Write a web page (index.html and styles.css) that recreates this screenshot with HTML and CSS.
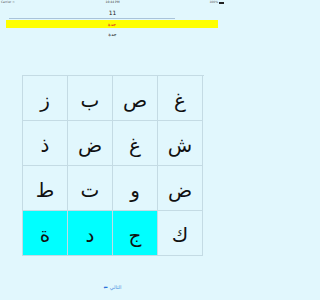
FILE: index.html
```html
<!DOCTYPE html>
<html lang="ar">
<head>
<meta charset="utf-8">
<link rel="stylesheet" href="styles.css">
</head>
<body>
<div class="status">
  <span class="carrier">Carrier <span class="wifi">&#8776;</span></span>
  <span class="time">10:44 PM</span>
  <span class="batt"><span class="pct">100%</span><span class="cell"></span></span>
</div>
<div class="count">11</div>
<div class="progress"></div>
<div class="answer">جدة</div>
<div class="word">جدة</div>
<div class="grid">
  <div class="sq">ز</div><div class="sq">ب</div><div class="sq">ص</div><div class="sq">غ</div>
  <div class="sq">ذ</div><div class="sq">ض</div><div class="sq">غ</div><div class="sq">ش</div>
  <div class="sq">ط</div><div class="sq">ت</div><div class="sq">و</div><div class="sq">ض</div>
  <div class="sq on">ة</div><div class="sq on">د</div><div class="sq on">ج</div><div class="sq">ك</div>
</div>
<div class="next"><span class="arrow">&#11013;</span><span>التالي</span></div>
</body>
</html>
```
FILE: styles.css
```css
html, body {
  margin: 0;
  padding: 0;
  background: #e1f7fd;
  font-family: "DejaVu Sans", sans-serif;
  width: 225px;
  height: 300px;
  overflow: hidden;
}
.status {
  height: 5px;
  display: flex;
  justify-content: space-between;
  align-items: center;
  font-size: 3px;
  line-height: 5px;
  color: #555;
  padding: 0 1px 0 1px;
}
.carrier { width: 40px; }
.time { color: #333; }
.batt { width: 40px; display: flex; justify-content: flex-end; align-items: center; gap: 1px; }
.cell { width: 5px; height: 2px; background: #222; }
.count {
  margin-top: 4px;
  text-align: center;
  font-size: 6px;
  line-height: 8px;
  color: #222;
}
.progress {
  margin: 1px 0 0 9px;
  width: 166px;
  height: 1px;
  background: #a9c3da;
}
.answer {
  margin: 1px 7px 0 6px;
  height: 8px;
  background: #ffff00;
  color: #e02020;
  text-align: center;
  font-size: 5px;
  line-height: 8px;
}
.word {
  margin-top: 2px;
  text-align: center;
  font-size: 5px;
  line-height: 8px;
  color: #222;
}
.grid {
  margin: 37px 0 0 22px;
  width: 181px;
  display: grid;
  grid-template-columns: repeat(4, 45px);
  grid-template-rows: repeat(4, 45px);
  border-top: 1px solid #c4dbe4;
  border-left: 1px solid #c4dbe4;
  direction: ltr;
}
.sq {
  border-right: 1px solid #c4dbe4;
  border-bottom: 1px solid #c4dbe4;
  display: flex;
  justify-content: center;
  align-items: center;
  font-size: 20px;
  color: #111;
  padding-top: 3px;
  box-sizing: border-box;
}
.sq.on { background: #00ffff; }
.next {
  margin-top: 28px;
  display: flex;
  justify-content: center;
  align-items: center;
  gap: 2px;
  color: #4a8fe0;
  font-size: 5px;
  line-height: 6px;
}
.arrow { font-size: 5px; color: #2a70d8; }
```
